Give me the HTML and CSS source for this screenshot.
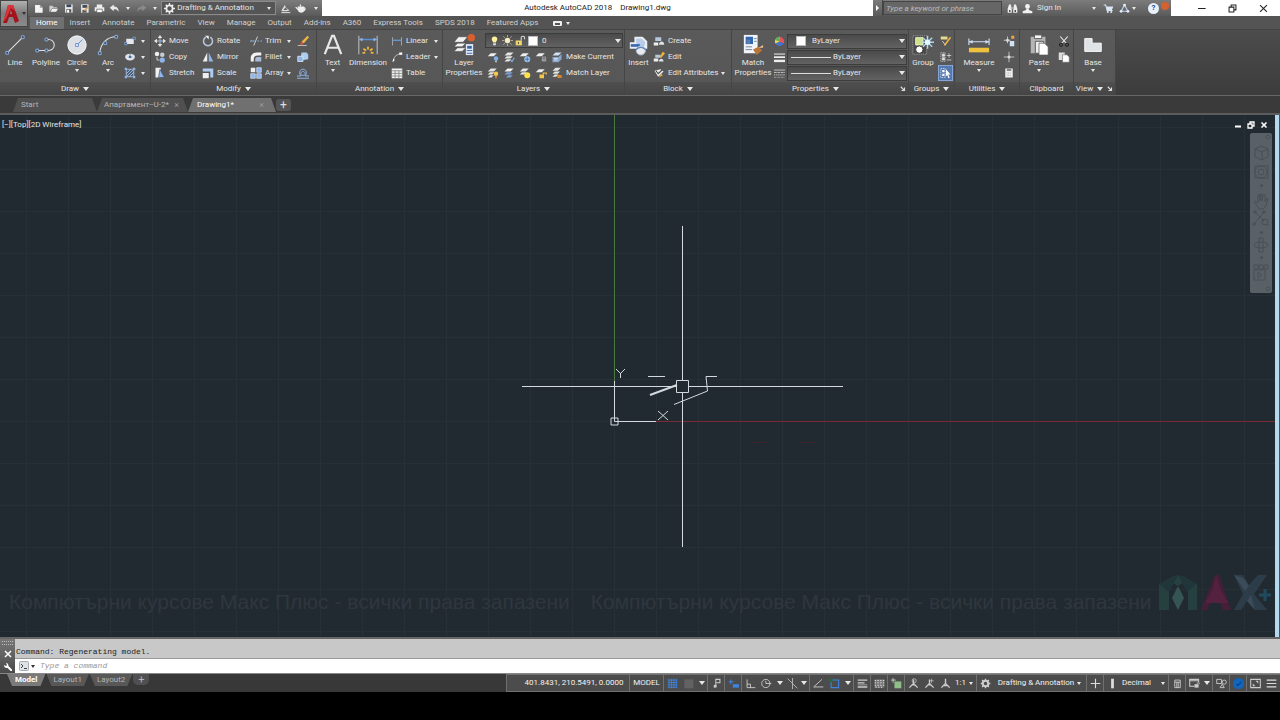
FILE: index.html
```html
<!DOCTYPE html>
<html lang="en">

<head>
  <meta charset="UTF-8" />
  <meta name="viewport" content="width=device-width, initial-scale=1.0" />
  <title>Autodesk AutoCAD 2018</title>
  <link rel="stylesheet" href="styles.css">
</head>

<body>
  <!-- title bar + ribbon tabs -->
  <header class="top">
    <button class="app-btn" aria-label="Application menu">
      <svg width="18" height="20" viewBox="0 0 18 20">
        <path d="M1 19 6 1h5l6 16-4 2-2-6H7l-2 6z" fill="#a5121b" />
        <path d="M6 1h5l2 6-4-3-4 9-4 6z" fill="#d8333b" />
        <path d="m8 10 1-4 1 4z" fill="#888" />
      </svg>
      <i class="caret dark"></i>
    </button>

    <div class="titlebar">
      <div class="qat">
        <button aria-label="New"><svg viewBox="0 0 16 16"><path d="M3 3h7l4 4v7H3z" fill="#f4f4f4" /><path d="M10 3v4h4z" fill="#999" /></svg></button>
        <button aria-label="Open"><svg viewBox="0 0 16 16"><path d="M2 13V4h5l1 2h5v2H6z" fill="#ccc" /><path d="m3 13 3-5h9l-3 5z" fill="#f2f2f2" stroke="#666" stroke-width=".6" /></svg></button>
        <button aria-label="Save"><svg viewBox="0 0 16 16"><path d="M3 2h11v12H3z" fill="#e8e8e8" /><path d="M5 2h7v4H5z" fill="#39485c" /><path d="M5 9h7v5H5z" fill="#555" /><path d="M6 10h3v4H6z" fill="#fff" /></svg></button>
        <button aria-label="Save as"><svg viewBox="0 0 16 16"><path d="M3 2h11v12H3z" fill="#e8e8e8" /><path d="M5 3h7v4H5z" fill="#39485c" /><path d="M5 10h6v4H5z" fill="#555" /><path d="m7 11 6-7 2 1-6 7z" fill="#d9a15c" /></svg></button>
        <button aria-label="Plot"><svg viewBox="0 0 16 16"><path d="M4 2h8v4H4zM1 6h14v6H1z" fill="#eee" /><path d="M4 9h8v5H4z" fill="#fff" stroke="#555" /></svg></button>
        <button aria-label="Undo"><svg viewBox="0 0 16 16"><path d="M1 7l6-5v3c5 0 7 3 7 8-2-4-4-4-7-4v3z" fill="#e9e9e9" /></svg></button>
        <i class="caret"></i>
        <button aria-label="Redo"><svg viewBox="0 0 16 16"><path d="M15 7 9 2v3c-5 0-7 3-7 8 2-4 4-4 7-4v3z" fill="#8a8a8a" /></svg></button>
        <i class="caret"></i>
        <div class="workspace">
          <svg viewBox="0 0 16 16"><circle cx="8" cy="8" r="4.500" fill="none" stroke="#eee" stroke-width="2.500" /><path d="M8 0v3M8 13v3M0 8h3M13 8h3M2.500 2.500l2 2M11.500 11.500l2 2M2.500 13.500l2-2M11.500 4.500l2-2" stroke="#eee" stroke-width="2" /></svg>
          <select aria-label="Workspace"><option>Drafting &amp; Annotation</option></select>
          <i class="caret"></i>
        </div>
        <button aria-label="Share"><svg viewBox="0 0 16 16"><path d="m2 11 5-8 2 4 5 4-4 1H3z" fill="#ddd" /><path d="m5 10 3-4 3 4z" fill="#666" /><path d="M2 14h13" stroke="#ddd" stroke-width="1.500" /></svg></button>
        <button aria-label="Render"><svg viewBox="0 0 16 16"><path d="M4 5h9c2 5 0 9-4 9s-6-4-5-9z" fill="#eee" /><path d="M5 10 1 6M12 7c4-1 3 4 0 4M8 2v3" stroke="#eee" stroke-width="1.800" fill="none" /></svg></button>
        <i class="caret customize"></i>
      </div>
      <div class="title"><span>Autodesk AutoCAD 2018</span><span>Drawing1.dwg</span></div>
      <div class="infocenter">
        <button class="expand" aria-label="Collapse search"></button>
        <input type="text" class="search" aria-label="Search" placeholder="Type a keyword or phrase">
        <button aria-label="Find"><svg viewBox="0 0 16 16"><path d="M3 2h3v3l1 1v8H1V8zM10 2h3l2 6v6H9V6l1-1z" fill="#eee" /><path d="M6 6h4v3H6z" fill="#aaa" /><path d="M3 10h2v3H3zM11 10h2v3h-2z" fill="#444" /></svg></button>
        <button class="signin"><svg viewBox="0 0 16 16"><circle cx="8" cy="5" r="3.500" fill="#f2f2f2" /><path d="M6 8h4v2l5 2v3H1v-3l5-2z" fill="#f2f2f2" /></svg>Sign In<i class="caret"></i></button>
        <button aria-label="App store"><svg viewBox="0 0 16 16"><path d="M1 3h3l2 8h8" stroke="#dbe6f5" fill="none" stroke-width="1.500" /><path d="M5 5h10l-2 5H6z" fill="#dbe6f5" /><circle cx="7" cy="13" r="1.500" fill="#dbe6f5" /><circle cx="12" cy="13" r="1.500" fill="#dbe6f5" /></svg></button>
        <button aria-label="Stay connected"><svg viewBox="0 0 16 16"><path d="m8 3 5 9H3z" fill="none" stroke="#b9cdea" stroke-width="1.800" /><g fill="#e5eefb"><circle cx="8" cy="3" r="2" /><circle cx="3" cy="12" r="2" /><circle cx="13" cy="12" r="2" /></g></svg></button>
        <i class="caret"></i>
        <button class="help" aria-label="Help">?</button>
        <i class="notice"></i>
      </div>
      <div class="win-btns">
        <button aria-label="Minimize"><svg viewBox="0 0 16 16"><path d="M3 8h11" stroke="#222" stroke-width="1.500" /></svg></button>
        <button aria-label="Restore"><svg viewBox="0 0 16 16"><path d="M3 6h7v7H3zM6 6V3h7v7h-3" fill="none" stroke="#222" stroke-width="1.500" /></svg></button>
        <button aria-label="Close"><svg viewBox="0 0 16 16"><path d="m3 3 10 10M13 3 3 13" stroke="#222" stroke-width="1.500" /></svg></button>
      </div>
    </div>

    <nav class="ribbon-tabs">
      <a class="active" href="#">Home</a>
      <a href="#">Insert</a>
      <a href="#">Annotate</a>
      <a href="#">Parametric</a>
      <a href="#">View</a>
      <a href="#">Manage</a>
      <a href="#">Output</a>
      <a href="#">Add-ins</a>
      <a href="#">A360</a>
      <a href="#">Express Tools</a>
      <a href="#">SPDS 2018</a>
      <a href="#">Featured Apps</a>
      <button class="min-ribbon" aria-label="Minimize ribbon"><b></b><i class="caret"></i></button>
    </nav>
  </header>

  <!-- ribbon -->
  <div class="ribbon">
    <section class="panel draw">
      <div class="panel-body">
        <button class="big"><svg viewBox="0 0 24 24"><path d="M4 20 20 4" stroke="#ddd" stroke-width="1.200" /><path d="M2 19h3v3H2zM19 2h3v3h-3z" fill="#345" stroke="#8fb4e8" /></svg>Line</button>
        <button class="big"><svg viewBox="0 0 24 24"><path d="M3 18h12a6 6 0 0 0 0-12h-2" fill="none" stroke="#ddd" stroke-width="1.200" /><path d="M1 16.500h3v3H1zM11 16.500h3v3h-3zM11 4.500h3v3h-3z" fill="#345" stroke="#8fb4e8" /></svg>Polyline</button>
        <button class="big"><svg viewBox="0 0 24 24"><circle cx="12" cy="12" r="10" fill="#dcdfe4" stroke="#fff" /><path d="m12 12 6-6" stroke="#5a86c8" /><path d="M10.500 10.500h3v3h-3z" fill="#fff" stroke="#5a86c8" /></svg>Circle<i class="caret"></i></button>
        <button class="big"><svg viewBox="0 0 24 24"><path d="M3 21C4 10 11 3 21 3" fill="none" stroke="#ddd" stroke-width="1.200" /><path d="M1.500 19.500h3v3h-3zM7.500 8.500h3v3h-3zM19.500 1.500h3v3h-3z" fill="#345" stroke="#8fb4e8" /></svg>Arc<i class="caret"></i></button>
        <div class="col">
          <button class="small" aria-label="Rectangle"><svg viewBox="0 0 16 16"><path d="M3 5h10v7H3z" fill="#e4e7ec" /><path d="M1 10h3v3H1zM12 3h3v3h-3z" fill="#345" stroke="#8fb4e8" /></svg><i class="caret"></i></button>
          <button class="small" aria-label="Ellipse"><svg viewBox="0 0 16 16"><ellipse cx="8" cy="8" rx="6.500" ry="4.500" fill="#dde3e8" /><path d="M6 8h5M8 3v5" stroke="#4a6c9c" /><circle cx="8" cy="8" r="1.500" fill="#3b5f95" /></svg><i class="caret"></i></button>
          <button class="small" aria-label="Hatch"><svg viewBox="0 0 16 16"><path d="M3 3h10v10H3z" fill="#47607e" stroke="#b9cfec" /><path d="m3 9 6-6M3 13 13 3M7 13l6-6" stroke="#b9cfec" /><path d="M1 1h3v3H1zM12 1h3v3h-3zM1 12h3v3H1zM12 12h3v3h-3z" fill="#8fb4e8" /></svg><i class="caret"></i></button>
        </div>
      </div>
      <h2>Draw <i class="caret"></i></h2>
    </section>

    <section class="panel modify">
      <div class="panel-body">
        <div class="grid">
          <button class="small"><svg viewBox="0 0 16 16"><path d="M8 2v12M2 8h12" stroke="#ddd" /><path d="m8 0 3 4H5zM8 16l3-4H5zM0 8l4-3v6zM16 8l-4-3v6z" fill="#e6e6e6" /><circle cx="8" cy="8" r="1.500" fill="#7aa2dc" /></svg>Move</button>
          <button class="small"><svg viewBox="0 0 16 16"><path d="M5 3a6 6 0 1 0 6 0" fill="none" stroke="#b9c7dc" stroke-width="2" /><path d="M4 1h5v5z" fill="#eee" /></svg>Rotate</button>
          <button class="small"><svg viewBox="0 0 16 16"><path d="M0 8h6M10 8h2M14 8h2" stroke="#8fb4e8" stroke-width="1.500" /><path d="m5 14 5-12" stroke="#ddd" stroke-width="1.200" /></svg>Trim<i class="caret"></i></button>
          <button class="small" aria-label="Erase"><svg viewBox="0 0 16 16"><path d="M1 14h12" stroke="#ddd" /><path d="m14 1 2 2-7 8-3-2z" fill="#f0b63c" /><path d="m6 9 3 2-3 3-2-2z" fill="#d9553a" /></svg></button>
          <button class="small"><svg viewBox="0 0 16 16"><circle cx="4" cy="4" r="3" fill="#eee" /><circle cx="11" cy="5" r="3" fill="#c7ccd3" /><circle cx="11" cy="12" r="3.500" fill="#8fb4e8" /><path d="M4 8v4h3" fill="none" stroke="#eee" /></svg>Copy</button>
          <button class="small"><svg viewBox="0 0 16 16"><path d="M7 2v12H1z" fill="#eee" /><path d="M9 2v12h6z" fill="#8fb4e8" /></svg>Mirror</button>
          <button class="small"><svg viewBox="0 0 16 16"><path d="M1 14V9c0-4 4-7 8-7h6v4H10c-3 0-5 2-5 5v3z" fill="#f4f4f4" /><path d="M7 14v-3c0-2 1-3 3-3h5v6z" fill="#a9bcd6" /></svg>Fillet<i class="caret"></i></button>
          <button class="small" aria-label="Explode"><svg viewBox="0 0 16 16"><path d="M6 2h7l2 3v6l-6 1-4-3z" fill="#aecbf0" /><path d="M1 7h7v7H1z" fill="#8fb4e8" stroke="#e3edfa" /></svg></button>
          <button class="small"><svg viewBox="0 0 16 16"><path d="M2 1h7v13H2z" fill="#f0f0f0" /><path d="m8 3 6 11H6z" fill="#8fb4e8" stroke="#345" stroke-width=".8" /></svg>Stretch</button>
          <button class="small"><svg viewBox="0 0 16 16"><path d="M1 2h14v12h-4V6H1z" fill="#aecbf0" /><path d="M1 8h8v7H1z" fill="#eee" /></svg>Scale</button>
          <button class="small"><svg viewBox="0 0 16 16"><path d="M1 1h6v6H1z" fill="#eee" /><path d="M9 1h6v6H9zM1 9h6v6H1zM9 9h6v6H9z" fill="#8fb4e8" stroke="#d6e4f7" /></svg>Array<i class="caret"></i></button>
          <button class="small" aria-label="Offset"><svg viewBox="0 0 16 16"><path d="M0 12h5C2 7 4 3 8 3s6 4 3 9h5M0 15h16M6 11c-2-3 0-5 2-5s4 2 2 5z" fill="none" stroke="#8fb4e8" stroke-width="1.300" /></svg></button>
        </div>
      </div>
      <h2>Modify <i class="caret"></i></h2>
    </section>

    <section class="panel annotation">
      <div class="panel-body">
        <button class="big"><svg viewBox="0 0 24 24"><path d="M3 22 11 2h2l8 20M6 15h12" fill="none" stroke="#e8e8e8" stroke-width="2.400" /></svg>Text<i class="caret"></i></button>
        <button class="big wide"><svg viewBox="0 0 24 24"><path d="M2 2v20M22 2v20" stroke="#b8b8b8" stroke-width="1.200" /><path d="M3 6h18" stroke="#5c8fd6" stroke-width="1.600" /><path d="m2 6 4-2v4zM22 6l-4-2v4z" fill="#8fb4e8" /><path d="m6 21 3-1M18 21l-3-1M7 16l3 2M17 16l-3 2M12 14v3" stroke="#f0b63c" stroke-width="2" /></svg>Dimension</button>
        <div class="col">
          <button class="small"><svg viewBox="0 0 16 16"><path d="M2 3v11M14 3v11" stroke="#bbb" /><path d="M2 7h12" stroke="#6d9de0" stroke-width="1.600" /></svg>Linear<i class="caret"></i></button>
          <button class="small"><svg viewBox="0 0 16 16"><path d="M3 14C4 8 6 5 12 4h2" stroke="#ddd" fill="none" /><path d="m2 15 1-5 2 2zM11 2h4v3h-4z" fill="#fff" /></svg>Leader<i class="caret"></i></button>
          <button class="small"><svg viewBox="0 0 16 16"><path d="M1 2h14v13H1z" fill="#f2f2f2" /><path d="M1 5h14M1 8.500h14M1 12h14M5.500 5v10M10.500 5v10" stroke="#777" /></svg>Table</button>
        </div>
      </div>
      <h2>Annotation <i class="caret"></i></h2>
    </section>

    <section class="panel layers">
      <div class="panel-body">
        <button class="big wide"><svg viewBox="0 0 24 24"><path d="m1 9 5-6h10l-5 6zM1 14l4-4h9l-4 4zM1 19l4-4h9l-4 4z" fill="#f2f2f2" stroke="#444" stroke-width=".6" /><path d="M14 11h8v12h-8z" fill="#dfe9f7" /><path d="M15.500 13h5v3h-5z" fill="#37639f" /><path d="M15 18h6M15 21h6" stroke="#37639f" /><circle cx="20" cy="4" r="4" fill="#d8602f" /></svg>Layer<br>Properties</button>
        <div class="col">
          <div class="combo layer-combo">
            <svg viewBox="0 0 16 16"><path d="M4 6a4 4 0 1 1 8 0c0 2-2 3-2 5H6c0-2-2-3-2-5z" fill="#fff0a0" /><path d="M6 12h4v3H6z" fill="#ddd" /></svg>
            <svg viewBox="0 0 16 16"><circle cx="8" cy="8" r="4" fill="#f3ecc4" /><path d="M8 0v3M8 13v3M0 8h3M13 8h3M2 2l2 2M12 12l2 2M2 14l2-2M12 4l2-2" stroke="#d9d2a4" /></svg>
            <svg viewBox="0 0 16 16"><path d="M1 8h9v7H1z" fill="#f0d66a" /><path d="M9 8V4c0-3 5-3 5 0v2" fill="none" stroke="#ddd" stroke-width="1.500" /><path d="M5 10v3" stroke="#554" stroke-width="1.500" /></svg>
            <b class="swatch"></b>
            <select aria-label="Layer"><option>0</option></select>
            <i class="caret"></i>
          </div>
          <div class="tools">
            <button aria-label="Off"><svg viewBox="0 0 16 16"><path d="m1 7 4-4h8l-4 4z" fill="#eee" /><circle cx="12" cy="10" r="3" fill="#7fb0e8" /><path d="M11 13h2v2h-2z" fill="#ddd" /></svg></button>
            <button aria-label="Isolate"><svg viewBox="0 0 16 16"><path d="m2 6 4-4h8l-4 4zM2 10l3-3h8l-3 3zM2 14l3-3h6l-3 3z" fill="#e4e4e4" /><path d="m10 12 2 2 3-5" stroke="#7fb0e8" fill="none" stroke-width="1.500" /></svg></button>
            <button aria-label="Freeze"><svg viewBox="0 0 16 16"><path d="m1 7 4-4h8l-4 4z" fill="#eee" /><circle cx="11" cy="11" r="4" fill="#9cc4f0" /><path d="M11 8v6M8 11h6" stroke="#36679f" /></svg></button>
            <button aria-label="Lock"><svg viewBox="0 0 16 16"><path d="m1 7 4-4h8l-4 4z" fill="#eee" /><path d="M9 10h6v4H9z" fill="#999" /><path d="M10 10V8h4v2" fill="none" stroke="#bbb" /></svg></button>
            <button class="small"><svg viewBox="0 0 16 16"><path d="m2 6 4-4h8l-4 4z" fill="#cfe0f7" /><path d="M2 8h8l4-4v7l-4 4H2z" fill="#8aa6cc" /><path d="M4 10h5M4 12h5" stroke="#e3edfa" /></svg>Make Current</button>
          </div>
          <div class="tools">
            <button aria-label="Turn all on"><svg viewBox="0 0 16 16"><path d="m1 6 4-4h8l-4 4zM1 10l3-3h6l-3 3zM1 14l3-3h5l-3 3z" fill="#e4e4e4" /><circle cx="12" cy="9" r="3" fill="#f5c84b" /><path d="M11 12h2v3h-2z" fill="#e88a3a" /></svg></button>
            <button aria-label="Unisolate"><svg viewBox="0 0 16 16"><path d="m2 6 4-4h8l-4 4z" fill="#f2f2f2" /><path d="m2 10 3-3h8l-3 3zM4 14l3-3h6l-3 3z" fill="#7f9ed0" /></svg></button>
            <button aria-label="Thaw all"><svg viewBox="0 0 16 16"><path d="m1 6 4-4h8l-4 4zM1 10l3-3h6l-3 3z" fill="#e4e4e4" /><circle cx="11" cy="11" r="4" fill="#ffe14d" /></svg></button>
            <button aria-label="Unlock"><svg viewBox="0 0 16 16"><path d="m1 7 4-4h8l-4 4z" fill="#eee" /><path d="M6 10h6v5H6z" fill="#f5c84b" /><path d="M11 10V8h4v2" fill="none" stroke="#f5c84b" stroke-width="1.500" /></svg></button>
            <button class="small"><svg viewBox="0 0 16 16"><path d="m2 5 4-4h7l-4 4zM2 9l3-3h7l-3 3zM2 13l3-3h5l-3 3z" fill="#e4e4e4" /><path d="m8 10 6 1 1 3-6 1z" fill="#d98634" /></svg>Match Layer</button>
          </div>
        </div>
      </div>
      <h2>Layers <i class="caret"></i></h2>
    </section>

    <section class="panel block">
      <div class="panel-body">
        <button class="big"><svg viewBox="0 0 24 24"><path d="M2 9h5V3h9l5 5v8H2z" fill="#eceff4" /><path d="M9 5h6l4 4-1 4H9z" fill="#b9cde8" /><path d="M3 11h10v3H3z" fill="#3d6db0" /><circle cx="14" cy="18" r="5" fill="#e8eaee" stroke="#9fb3cf" /><path d="M9 17c3-3 7-3 10 0" fill="none" stroke="#5c86c0" stroke-width="1.500" /></svg>Insert</button>
        <div class="col">
          <button class="small"><svg viewBox="0 0 16 16"><path d="M3 3h8v5H3z" fill="#b9c7dc" /><path d="M1 10h6v4H1z" fill="#eee" /><path d="M8 13c0-6 7-6 7 0z" fill="#dfe3ea" /></svg>Create</button>
          <button class="small"><svg viewBox="0 0 16 16"><path d="M3 5h7v4H3z" fill="#b9c7dc" /><path d="M1 10h6v4H1z" fill="#eee" /><path d="M8 14c0-5 6-5 6 0z" fill="#dfe3ea" /><path d="m9 8 4-7 3 2-5 6z" fill="#f0b63c" /></svg>Edit</button>
          <button class="small"><svg viewBox="0 0 16 16"><path d="m2 5 5 8 7-7-4-3z" fill="#eee" /><path d="m4 5 3 4 5-5" fill="none" stroke="#444" stroke-width="1.500" /><path d="m8 14 3-5 2 2z" fill="#f0b63c" /></svg>Edit Attributes<i class="caret"></i></button>
        </div>
      </div>
      <h2>Block <i class="caret"></i></h2>
    </section>

    <section class="panel properties">
      <div class="panel-body">
        <button class="big wide"><svg viewBox="0 0 24 24"><path d="M2 1h15v20H2z" fill="#f2f4f7" /><path d="M4 3h8v8H4z" fill="#2f66b0" /><path d="M5 6h4v5H5z" fill="#5a7fae" /><path d="M13 5h3M13 8h3M4 14h7M4 17h7" stroke="#6c7f99" /><path d="m12 17 6-3 4 4-6 5z" fill="#b9743a" /><path d="m18 15 5-3v3z" fill="#eac08c" /></svg>Match<br>Properties</button>
        <div class="props">
          <svg viewBox="0 0 16 16"><path d="M8 8V1a7 7 0 0 1 6 10z" fill="#e8505b" /><path d="m8 8 6 3a7 7 0 0 1-12 0z" fill="#4673d0" /><path d="M8 8 2 11A7 7 0 0 1 8 1z" fill="#f2d94c" /><path d="M8 1a7 7 0 0 0-6 5l6 2z" fill="#59b356" /></svg>
          <div class="combo"><b class="swatch"></b><select aria-label="Object color"><option>ByLayer</option></select><i class="caret"></i></div>
          <svg viewBox="0 0 16 16"><path d="M0 3h16" stroke="#eee" stroke-width="1.500" /><path d="M0 7.500h16" stroke="#eee" stroke-width="2.500" /><path d="M0 13h16" stroke="#eee" stroke-width="3.500" /></svg>
          <div class="combo"><b class="line"></b><select aria-label="Lineweight"><option>ByLayer</option></select><i class="caret"></i></div>
          <svg viewBox="0 0 16 16"><path d="M0 3h16" stroke="#eee" /><path d="M0 6.500h16" stroke="#eee" stroke-dasharray="4 1" /><path d="M0 10h16" stroke="#eee" stroke-dasharray="2 1" /><path d="M0 13.500h16" stroke="#eee" stroke-dasharray="1 1" /></svg>
          <div class="combo"><b class="line"></b><select aria-label="Linetype"><option>ByLayer</option></select><i class="caret"></i></div>
        </div>
      </div>
      <h2>Properties <i class="caret"></i><svg class="launcher" viewBox="0 0 8 8"><path d="M1 1l4 4M6 2v4H2" fill="none" stroke="#ddd" stroke-width="1.500" /></svg></h2>
    </section>

    <section class="panel groups">
      <div class="panel-body">
        <button class="big"><svg viewBox="0 0 24 24"><path d="M1 2h15v20H1z" fill="#4b4b4b" stroke="#aaa" stroke-dasharray="1 1" /><path d="M4 4h8v8H4z" fill="#cfe08a" stroke="#edf4c8" /><circle cx="8" cy="17" r="4" fill="#fff" stroke="#333" /><path d="M17 2v14M10 9h14M12 4l10 10M22 4 12 14" stroke="#a9d8f5" stroke-width="1.500" /><circle cx="17" cy="9" r="3" fill="#e6f6ff" /></svg>Group</button>
        <div class="col">
          <button class="small" aria-label="Ungroup"><svg viewBox="0 0 16 16"><path d="M1 2h9v4H1z" fill="#e4d98e" /><path d="m6 14 8-11" stroke="#f0b63c" stroke-width="2" /><path d="m3 8 4 5" stroke="#eee" /></svg></button>
          <button class="small" aria-label="Group edit"><svg viewBox="0 0 16 16"><path d="M1 2h6v12H1z" fill="none" stroke="#bbb" stroke-dasharray="2 1" /><path d="M3 4h3v3H3zM3 9h3v3H3zM9 6h6M12 3v6M9 12h6" stroke="#ddd" fill="#ddd" /></svg></button>
          <button class="small on" aria-label="Group selection"><svg viewBox="0 0 16 16"><path d="M1 2h6v12H1z" fill="none" stroke="#d6e4f7" stroke-dasharray="2 1" /><path d="M3 4h3v3H3zM3 9h3v3H3zM8 3l6 7H11l2 4-2 1-1-4-2 1z" fill="#fff" /></svg></button>
        </div>
      </div>
      <h2>Groups <i class="caret"></i></h2>
    </section>

    <section class="panel utilities">
      <div class="panel-body">
        <button class="big wide"><svg viewBox="0 0 24 24"><path d="M1 5v7M23 5v7M1 8.500h22" stroke="#cfe0f7" stroke-width="1.200" /><path d="m1 8.500 4-2v4zM23 8.500l-4-2v4z" fill="#cfe0f7" /><path d="M1 15h22v5H1z" fill="#eec13f" /></svg>Measure<i class="caret"></i></button>
        <div class="col">
          <button class="small" aria-label="Quick select"><svg viewBox="0 0 16 16"><path d="M6 2v9M1 7h9" stroke="#ddd" /><circle cx="6" cy="7" r="2" fill="#ddd" /><path d="M11 1h4v4h-4z" fill="#f0a63c" /><path d="M9 8h6v7H9z" fill="#cfe0f7" /></svg></button>
          <button class="small" aria-label="Point"><svg viewBox="0 0 16 16"><path d="M8 1v14M1 8h14" stroke="#ddd" /><circle cx="8" cy="8" r="2" fill="#ddd" /></svg></button>
          <button class="small" aria-label="Calculator"><svg viewBox="0 0 16 16"><path d="M3 2h10v12H3z" fill="#eee" /><path d="M5 4h6" stroke="#666" stroke-width="2" /><path d="M5 8h6M5 11h6" stroke="#888" stroke-dasharray="1 1" /></svg></button>
        </div>
      </div>
      <h2>Utilities <i class="caret"></i></h2>
    </section>

    <section class="panel clipboard">
      <div class="panel-body">
        <button class="big"><svg viewBox="0 0 24 24"><path d="M3 3h16v18H3z" fill="#b5b5b5" /><path d="M7 1h8v4H7z" fill="#f5f5f5" stroke="#555" /><path d="M8 8h9v13H8z" fill="#eee" stroke="#555" /><path d="M12 10h6l4 4v9H12z" fill="#fff" stroke="#555" stroke-width=".8" /></svg>Paste<i class="caret"></i></button>
        <div class="col">
          <button class="small" aria-label="Cut"><svg viewBox="0 0 16 16"><path d="m3 2 8 9M13 2 5 11" stroke="#eee" stroke-width="1.500" /><circle cx="4" cy="13" r="2" fill="none" stroke="#222" stroke-width="1.500" /><circle cx="12" cy="13" r="2" fill="none" stroke="#222" stroke-width="1.500" /></svg></button>
          <button class="small" aria-label="Copy clip"><svg viewBox="0 0 16 16"><path d="M1 2h8v10H1z" fill="#ddd" /><path d="M6 5h6l3 3v7H6z" fill="#fff" stroke="#666" stroke-width=".8" /></svg></button>
        </div>
      </div>
      <h2>Clipboard</h2>
    </section>

    <section class="panel view">
      <div class="panel-body">
        <button class="big"><svg viewBox="0 0 24 24"><path d="M3 5h8v5h10v9H3z" fill="#dfe2e6" stroke="#fff" /></svg>Base<i class="caret"></i></button>
      </div>
      <h2>View <i class="caret"></i><svg class="launcher" viewBox="0 0 8 8"><path d="M1 1l4 4M6 2v4H2" fill="none" stroke="#ddd" stroke-width="1.500" /></svg></h2>
    </section>
  </div>

  <!-- open drawings -->
  <nav class="file-tabs">
    <a class="start" href="#">Start</a>
    <a href="#">Апартамент--U-2*<i>×</i></a>
    <a class="active" href="#">Drawing1*<i>×</i></a>
    <button aria-label="New drawing">+</button>
  </nav>

  <!-- model space -->
  <main class="viewport">
    <svg class="canvas">
      <defs>
        <pattern id="grid" x="614" y="12" width="42" height="42" patternUnits="userSpaceOnUse">
          <path d="M.5 0v42M0 .5h42" stroke="#272f37" />
        </pattern>
      </defs>
      <rect width="100%" height="100%" fill="url(#grid)" />
      <line x1="614.500" y1="0" x2="614.500" y2="266" stroke="#48793f" />
      <line x1="655" y1="306.500" x2="100%" y2="306.500" stroke="#7a2a36" />
      <path d="M752 327.500h15M800 327.500h16" stroke="#40242d" />
      <g fill="none" stroke="#d3d9dc">
        <path d="M614.500 266v40.500H656M611 303h7v7h-7z" />
        <path d="m616 254 4.500 4.500 4.500-4.500M620.500 258v5M658 296l10 9M668 296l-10 9" />
        <path d="M648 261.500h17M717 261.500h-11l1.500 14.500L674 289.500" />
        <path d="m650 280 27-10" stroke-width="2" />
        <path d="M522 271.500h154M689 271.500h154M682.500 111v154M682.500 277v155M676.500 265.500h12v12h-12z" />
      </g>
    </svg>

    <div class="view-label"><a href="#">[−]</a><a href="#">[Top]</a><a href="#">[2D Wireframe]</a></div>

    <div class="doc-btns">
      <button aria-label="Minimize drawing"><svg viewBox="0 0 8 8"><path d="M1 5.500h6" stroke="#fff" stroke-width="2" /></svg></button>
      <button aria-label="Restore drawing"><svg viewBox="0 0 8 8"><path d="M1 3h4v4H1zM3 3V1h4v4H5" stroke="#fff" fill="none" stroke-width="1.300" /></svg></button>
      <button aria-label="Close drawing"><svg viewBox="0 0 8 8"><path d="m1.500 1.500 5 5M6.500 1.500l-5 5" stroke="#fff" stroke-width="1.600" /></svg></button>
    </div>

    <div class="navbar">
      <svg width="22" height="160" viewBox="0 0 22 160" fill="none" stroke="#484f55">
        <circle cx="18" cy="4" r="2" />
        <path d="m5 16 6-3 7 3v8l-6 3-7-3zM5 16l7 3 6-3M12 19v8" />
        <path d="M5 33h13v12H5z" /><circle cx="11" cy="39" r="6" /><circle cx="11" cy="39" r="3" />
        <path d="M10 52h3l-1.500 2zM10 99h3l-1.500 2zM10 124h3l-1.500 2z" fill="#434a50" />
        <path d="M8 74c-3-4-4-5-3-6l3 2V62h2v6-7h2v7l1-6h2v7l2-4 1 1-2 7-3 3H9z" />
        <path d="m5 79 9 9M14 79l-9 11" /><circle cx="15" cy="89" r="3" /><path d="m17 91 2 2M4 78h2v2H4zM13 78h2v2h-2zM3 90h2v2H3z" />
        <ellipse cx="11" cy="112" rx="7" ry="3" /><path d="M9 105h4v14H9z" />
        <path d="M4 132h4v4H4zM9 132h4v4H9zM14 132h4v4h-4zM4 137h11v10H4zM8 139l4 3-4 3z" />
        <circle cx="18" cy="156" r="2" />
      </svg>
    </div>

    <div class="watermark">
      <span>Компютърни курсове Макс Плюс - всички права запазени</span>
      <span>Компютърни курсове Макс Плюс - всички права запазени</span>
      <svg width="114" height="38" viewBox="0 0 114 38">
        <path d="M1 10 14 3l6-2 6 2 13 7v26H30V18l-5-9-5 3-5-3-4 9v18H1z" fill="#25403f" />
        <path d="m20 12 6 12-6 12-6-12z" fill="#355552" />
        <path d="M1 10 20 1l-9 17zM39 10 20 1l9 17z" fill="#20363a" />
        <path d="M43 36 57 1h4l12 35h-8l-3-7H52l-3 7z" fill="#451f39" />
        <path d="m58 1 4 14 8 14H47l8-14z" fill="#54223f" />
        <path d="M76 1h9l6 10 9-10h9L96 20l13 16H97l-8-9-6 9h-7l9-16z" fill="#2c3d49" />
        <path d="m76 1 9 3 6 8-4 5zM97 36l-8-9 4-6z" fill="#3b4b59" />
        <path d="M107 15v12M101 21h12" stroke="#204a5e" stroke-width="3" />
      </svg>
    </div>
  </main>

  <!-- command line -->
  <div class="command">
    <div class="command-side">
      <i class="grip"></i>
      <button aria-label="Close command line"><svg viewBox="0 0 8 8"><path d="m1 1 6 6M7 1 1 7" stroke="#fff" stroke-width="1.500" /></svg></button>
      <button aria-label="Customize"><svg viewBox="0 0 8 8"><path d="m3 3 5 5" stroke="#fff" stroke-width="2" /><path d="M0 2c0 3 3 4 4 2s0-4-2-4l1 2-1 1z" fill="#fff" /></svg></button>
    </div>
    <div class="command-main">
      <p>Command: Regenerating model.</p>
      <label class="prompt">
        <svg viewBox="0 0 10 10"><rect x=".5" y=".5" width="9" height="9" rx="1" fill="#dde2e6" stroke="#a5abb0" /><path d="m2 3 2 2-2 2M5 7.500h3" fill="none" stroke="#444" /></svg>
        <i class="caret dark"></i>
        <input type="text" placeholder="Type a command" aria-label="Command">
      </label>
    </div>
  </div>

  <footer class="bottom">
    <nav class="layout-tabs">
      <a class="active" href="#">Model</a>
      <a href="#">Layout1</a>
      <a href="#">Layout2</a>
      <button aria-label="New layout">+</button>
    </nav>

    <div class="status">
      <button class="coords">401.8431, 210.5491, 0.0000</button>
      <button class="model sep">MODEL</button>
      <button class="sep" aria-label="Grid"><svg viewBox="0 0 16 16"><path d="M3 1v14M6.500 1v14M10 1v14M13.500 1v14M1 3h14M1 6.500h14M1 10h14M1 13.500h14" stroke="#3d85e0" stroke-width="1.300" /></svg></button>
      <button aria-label="Snap"><svg viewBox="0 0 16 16"><path d="M2 2h13v13H2z" fill="#626262" /></svg></button>
      <button class="drop" aria-label="Snap settings"><i class="caret"></i></button>
      <button class="sep" aria-label="Infer constraints"><svg viewBox="0 0 16 16"><path d="M7 12V2h6v5H8" fill="none" stroke="#ccc" stroke-width="1.500" /><path d="M4 10h4v4H4z" fill="#ccc" /></svg></button>
      <button class="sep" aria-label="Dynamic input"><svg viewBox="0 0 16 16"><path d="M4 2v7M1 5.500h7" stroke="#3d85e0" stroke-width="1.500" /><path d="M7 9h9v5H7z" fill="#3d85e0" /></svg></button>
      <button class="sep" aria-label="Ortho"><svg viewBox="0 0 16 16"><path d="M3 2v12h12M3 9h5v5" fill="none" stroke="#ccc" stroke-width="1.300" /></svg></button>
      <button aria-label="Polar"><svg viewBox="0 0 16 16"><circle cx="7" cy="8" r="6" fill="none" stroke="#ccc" stroke-width="1.300" /><path d="M7 4v4h8" stroke="#ccc" fill="none" stroke-width="1.300" /></svg></button>
      <button class="drop" aria-label="Polar settings"><i class="caret"></i></button>
      <button class="narrow" aria-label="Isodraft"><svg viewBox="0 0 16 16"><path d="m1 1 14 14M8 0v16" stroke="#bbb" stroke-width="1.300" /></svg></button>
      <button class="drop" aria-label="Isoplanes"><i class="caret"></i></button>
      <button class="sep" aria-label="Snap tracking"><svg viewBox="0 0 16 16"><path d="M15 13H1L13 2" fill="none" stroke="#ccc" stroke-width="1.300" /></svg></button>
      <button aria-label="Object snap"><svg viewBox="0 0 16 16"><path d="M3 3h11v11H3z" fill="none" stroke="#3d85e0" stroke-width="1.600" /><path d="M0 1h5v5H0z" fill="#246b38" /></svg></button>
      <button class="drop" aria-label="Snap modes"><i class="caret"></i></button>
      <button class="sep" aria-label="Lineweight"><svg viewBox="0 0 16 16"><path d="M1 3h14M1 7h10M1 13h14" stroke="#ccc" stroke-width="2" /><path d="M1 10h14" stroke="#ccc" /></svg></button>
      <button class="sep" aria-label="Transparency"><svg viewBox="0 0 16 16"><path d="M1 2h14v12H1z" fill="#777" /><path d="M1 3.500h14M1 7h14M1 10.500h14M2 13.500h12" stroke="#ddd" stroke-width="1.500" stroke-dasharray="2 2" /></svg></button>
      <button class="sep" aria-label="Selection cycling"><svg viewBox="0 0 16 16"><path d="M5 5h10v10H5z" fill="#8fbf86" /><path d="M3 0v7M0 3h7" stroke="#ccc" stroke-width="1.300" /></svg></button>
      <button class="sep" aria-label="Annotation visibility"><svg viewBox="0 0 16 16"><path d="M8 2v6l-6 6M8 8l6 6M6 10h4" fill="none" stroke="#ccc" stroke-width="2" /><circle cx="9" cy="4" r="3" fill="none" stroke="#ccc" /></svg></button>
      <button aria-label="Auto scale"><svg viewBox="0 0 16 16"><path d="M8 2v6l-6 6M8 8l6 6M6 10h4" fill="none" stroke="#ccc" stroke-width="2" /><path d="M11 1v6M8 4h6" stroke="#ccc" /></svg></button>
      <button class="narrow" aria-label="Annotation scale"><svg viewBox="0 0 16 16"><path d="M8 1v7l-6 6M8 8l6 6M5 11h6" fill="none" stroke="#ccc" stroke-width="2" /></svg></button>
      <button class="text">1:1<i class="caret"></i></button>
      <button class="sep" aria-label="Settings"><svg viewBox="0 0 16 16"><circle cx="8" cy="8" r="4" fill="none" stroke="#ccc" stroke-width="3" /><path d="M8 1v3M8 12v3M1 8h3M12 8h3M3 3l2 2M11 11l2 2M3 13l2-2M11 5l2-2" stroke="#ccc" stroke-width="2" /></svg></button>
      <button class="text ws">Drafting &amp; Annotation<i class="caret"></i></button>
      <button class="sep" aria-label="Annotation monitor"><svg viewBox="0 0 16 16"><path d="M8 1v14M1 8h14" stroke="#ddd" stroke-width="1.600" /></svg></button>
      <button class="sep" aria-label="Units"><svg viewBox="0 0 16 16"><path d="M6 1h4v14H6z" fill="#ddd" /></svg></button>
      <button class="text units">Decimal<i class="caret"></i></button>
      <button class="sep" aria-label="Quick properties"><svg viewBox="0 0 16 16"><path d="M4 3h8v11H4zM4 6h8M7 6v8M9 6v8" fill="none" stroke="#ccc" stroke-width="1.300" /></svg></button>
      <button class="sep" aria-label="Lock UI"><svg viewBox="0 0 16 16"><path d="M8 12H1V2h13v4M1 4h13" fill="none" stroke="#ccc" stroke-width="1.500" /><path d="M8 9h6v5H8z" fill="#ccc" /><path d="M12 9V7h3v2" fill="none" stroke="#ccc" /></svg></button>
      <button class="drop" aria-label="Lock options"><i class="caret"></i></button>
      <button class="sep" aria-label="Isolate objects"><svg viewBox="0 0 16 16"><path d="M1 2h7v6H1zM6 14l3-5 3 5z" fill="none" stroke="#ccc" stroke-width="1.300" /><circle cx="12" cy="6" r="3" fill="none" stroke="#ccc" stroke-width="1.300" /></svg></button>
      <button class="sep" aria-label="Hardware acceleration"><svg viewBox="0 0 16 16"><circle cx="8" cy="8" r="8" fill="#1265bd" /><path d="m5 9 2 2 5-5" fill="none" stroke="#0b3c78" stroke-width="1.500" /></svg></button>
      <button class="sep" aria-label="Clean screen"><svg viewBox="0 0 16 16"><path d="M1 2h14v12H1z" fill="none" stroke="#ccc" stroke-width="1.500" /><path d="M4 12V8l4 4zM12 4v4L8 4z" fill="#ccc" /></svg></button>
      <button aria-label="Customization"><svg viewBox="0 0 16 16"><path d="M1 3h14M1 8h14M1 13h14" stroke="#ddd" stroke-width="1.800" /></svg></button>
    </div>
  </footer>
</body>

</html>
```
FILE: styles.css
```css
* {
  margin: 0;
  padding: 0;
  box-sizing: border-box;
}

body {
  display: flex;
  flex-direction: column;
  min-height: 100vh;
  padding-bottom: 28px;
  background: #000;
  color: #e6e6e6;
  font: 8px/10px Roboto, "Noto Sans", sans-serif;
  overflow-x: hidden;
}

a {
  color: inherit;
  text-decoration: none;
}

button,
select,
input {
  border: 0;
  background: none;
  color: inherit;
  font: inherit;
}

button {
  display: flex;
  align-items: center;
  justify-content: center;
  white-space: nowrap;
}

select {
  appearance: none;
  flex: 1;
  min-width: 0;
}

svg {
  flex: none;
}

.caret {
  flex: none;
  border: 2px solid transparent;
  border-top: 3px solid #e8e8e8;
  border-bottom: 0;
}

.caret.dark {
  border-top-color: #333;
}

/* title bar */
.top {
  display: grid;
  grid-template: 16px 13px / 28px 1fr;
  background: #545454;
  border-bottom: 1px solid #444;
}

.app-btn {
  grid-row: 1 / 3;
  height: 27px;
  gap: 2px;
  background: linear-gradient(#b0b0b0, #7c7c7c 50%, #8a8a8a);
  border: 1px solid #444;
}

.titlebar {
  display: flex;
  background: #fff;
}

.titlebar svg {
  width: 11px;
  height: 11px;
}

.qat,
.infocenter {
  display: flex;
  align-items: center;
  background: linear-gradient(#7c7c7c, #5a5a5a);
}

.qat {
  width: 294px;
  padding-left: 3px;
}

.qat button {
  width: 16px;
  height: 16px;
}

.qat > .caret {
  margin: 0 4px;
}

.qat .customize {
  margin-left: 6px;
}

.workspace {
  display: flex;
  align-items: center;
  gap: 2px;
  width: 120px;
  height: 14px;
  margin: 0 2px 0 0;
  padding: 0 4px 0 2px;
  background: #555;
  border: 1px solid #8a8a8a;
}

.title {
  flex: 1;
  display: flex;
  justify-content: center;
  gap: 8px;
  line-height: 16px;
  color: #222;
}

.infocenter {
  width: 298px;
}

.search {
  width: 119px;
  height: 14px;
  margin-right: 2px;
  padding: 0 2px;
  background: #666;
  border: 1px solid #444;
  font-style: italic;
}

.search::placeholder {
  color: #bbb;
}

.infocenter button {
  width: 16px;
}

.infocenter .expand {
  width: 10px;
  height: 16px;
  border-right: 1px solid #444;
}

.expand::before {
  content: "";
  border: 3px solid transparent;
  border-left-color: #fff;
  border-right: 0;
}

.infocenter .signin {
  justify-content: flex-start;
  width: 80px;
  gap: 4px;
  padding: 0 4px 0 2px;
}

.signin .caret {
  margin-left: auto;
}

.infocenter .help {
  width: 11px;
  height: 11px;
  margin-left: 12px;
  border-radius: 50%;
  background: #e8f0fa;
  color: #1d4f96;
  font-weight: bold;
}

.notice {
  width: 8px;
  height: 8px;
  margin: 0 2px 4px 2px;
  border-radius: 50%;
  background: #d4622f;
}

.win-btns {
  display: flex;
  width: 109px;
  padding-left: 15px;
}

.win-btns button {
  width: 31px;
}

/* ribbon tabs */
.ribbon-tabs {
  display: flex;
  align-items: flex-end;
  padding-left: 2px;
  color: #cfcfcf;
}

.ribbon-tabs a {
  padding: 0 6px;
  line-height: 12px;
}

.ribbon-tabs .active {
  background: #707070;
  color: #fff;
}

.min-ribbon {
  height: 12px;
  margin-left: 9px;
  gap: 4px;
}

.min-ribbon b {
  width: 9px;
  height: 5px;
  border: 2px solid #eee;
  border-bottom-width: 1px;
  border-radius: 1px;
  background: #555;
}

/* ribbon panels */
.ribbon {
  display: flex;
  height: 66px;
  background: linear-gradient(#4c4c4c, #3c3c3c);
  border-bottom: 1px solid #666;
}

.panel {
  display: flex;
  flex-direction: column;
  flex: none;
  background: linear-gradient(#5a5a5a, #565656);
  border-right: 1px solid #454545;
}

.panel-body {
  flex: 1;
  display: flex;
  padding-top: 3px;
}

.panel h2 {
  display: flex;
  align-items: center;
  justify-content: center;
  gap: 4px;
  height: 13px;
  background: linear-gradient(#4f4f4f, #454545);
  font-size: 8px;
  font-weight: normal;
}

.panel h2 .caret {
  border-width: 4px 3px 0;
}

.launcher {
  width: 6px;
  height: 6px;
}

.draw { width: 151px; }
.modify { width: 166px; }
.annotation { width: 126px; }
.layers { width: 182px; }
.block { width: 107px; }
.properties { width: 177px; }
.groups { width: 46px; }
.utilities { width: 65px; }
.clipboard { width: 54px; }
.view { width: 42px; }

.big {
  flex-direction: column;
  justify-content: flex-start;
  width: 30px;
  height: 48px;
}

.big svg {
  width: 22px;
  height: 22px;
  margin: 1px 0 2px;
}

.big .caret {
  margin-top: 1px;
}

.big.wide {
  width: 42px;
}

.small {
  justify-content: flex-start;
  gap: 3px;
  height: 16px;
}

.small svg {
  width: 12px;
  height: 12px;
}

.draw .panel-body {
  gap: 1px;
}

.draw .small {
  gap: 5px;
}

.grid {
  display: grid;
  grid-template-columns: 48px 48px 47px 16px;
  grid-template-rows: repeat(3, 16px);
  padding-left: 3px;
}

.grid .caret {
  margin-left: auto;
  margin-right: 6px;
}

.annotation .big {
  width: 31px;
}

.annotation .big.wide {
  width: 40px;
}

.annotation .col {
  margin-left: 3px;
}

.annotation .small {
  width: 47px;
}

.annotation .small .caret {
  margin-left: auto;
}

/* drop-down boxes */
.combo {
  display: flex;
  align-items: center;
  gap: 4px;
  height: 15px;
  padding: 0 1px 0 3px;
  background: linear-gradient(#4a4a4a, #626262);
  border: 1px solid #3c3c3c;
}

.combo .caret {
  border-width: 4px 3px 0;
}

.combo svg {
  width: 11px;
  height: 11px;
}

.combo .swatch {
  width: 10px;
  height: 10px;
  background: #fff;
  border: 1px solid #bbb;
}

.layer-combo {
  gap: 2px;
  width: 138px;
  margin-bottom: 1px;
}

.layer-combo select {
  padding-left: 2px;
}

.tools {
  display: flex;
  align-items: center;
  height: 16px;
}

.tools button {
  width: 16px;
}

.tools svg {
  width: 12px;
  height: 12px;
}

.tools .small {
  width: auto;
  padding-left: 2px;
}

.block .panel-body {
  gap: 1px;
}

.block .big {
  width: 27px;
}

.props {
  display: grid;
  grid-template-columns: 12px 120px;
  grid-template-rows: repeat(3, 16px);
  column-gap: 1px;
  align-items: center;
}

.props > svg {
  width: 11px;
  height: 11px;
}

.props .swatch {
  margin: 0 2px 0 5px;
}

.props .line {
  width: 40px;
  height: 1px;
  margin-right: -2px;
  background: #ddd;
}

.properties h2 {
  padding-left: 60px;
  justify-content: flex-start;
}

.properties .launcher {
  margin: 0 2px 0 auto;
}

.groups .panel-body {
  gap: 1px;
}

.groups .big {
  width: 28px;
}

.small.on {
  background: #5578b0;
  border: 1px solid #86a5d6;
}

.groups .col .small {
  width: 15px;
  justify-content: center;
}

.utilities .big {
  width: 48px;
}

.clipboard .big,
.view .big {
  width: 38px;
}

/* drawing tabs */
.file-tabs {
  display: flex;
  align-items: center;
  height: 19px;
  padding: 1px 0 0 13px;
  background: #3a3a3a;
  border-bottom: 2px solid #5c5c5c;
  color: #b5b5b5;
}

.file-tabs a {
  display: flex;
  align-items: center;
  justify-content: space-between;
  width: 91px;
  height: 14px;
  padding: 0 9px 0 7px;
  background: #505050;
  clip-path: polygon(5px 0, 86px 0, 100% 100%, 0 100%);
}

.file-tabs .start {
  width: 84px;
  padding-left: 8px;
  clip-path: polygon(5px 0, 79px 0, 100% 100%, 0 100%);
}

.file-tabs .active {
  width: 88px;
  padding: 0 12px 0 9px;
  background: #707070;
  color: #fff;
  clip-path: polygon(5px 0, 83px 0, 100% 100%, 0 100%);
}

.file-tabs i {
  color: #999;
  font-style: normal;
  font-size: 9px;
}

.file-tabs button {
  width: 15px;
  height: 12px;
  border-radius: 3px;
  background: #555;
  color: #ddd;
  font-size: 12px;
}

/* model space */
.viewport {
  position: relative;
  flex: 1;
  min-height: 300px;
  background: #222a31;
  border-right: 1px solid #1d5f7c;
  box-shadow: inset -4px 0 #b3d9ee;
}

.canvas {
  position: absolute;
  top: 0;
  left: 0;
  width: calc(100% - 4px);
  height: 100%;
}

.view-label {
  position: absolute;
  top: 4px;
  left: 2px;
  line-height: 12px;
}

.doc-btns {
  position: absolute;
  top: 6px;
  right: 11px;
  display: flex;
  gap: 5px;
}

.doc-btns svg {
  width: 8px;
  height: 8px;
}

.navbar {
  position: absolute;
  top: 18px;
  right: 7px;
  height: 160px;
  border-radius: 2px;
  background: #596066;
}

.watermark {
  position: absolute;
  right: 7px;
  bottom: 21px;
  left: 9px;
  display: flex;
  align-items: flex-end;
  color: #2f373e;
  font: 21px/28px "Liberation Sans", sans-serif;
  white-space: nowrap;
}

.watermark span + span {
  margin-left: 21px;
}

.watermark svg {
  margin: 0 0 4px auto;
}

/* command line */
.command {
  display: flex;
  height: 37px;
  border-top: 2px solid #666;
  border-bottom: 1px solid #888;
}

.command-side {
  display: flex;
  flex-direction: column;
  align-items: center;
  justify-content: space-between;
  width: 15px;
  padding: 2px 0;
  background: linear-gradient(#777, #4a4a4a);
}

.grip {
  width: 11px;
  height: 4px;
  border-top: 1px dotted #bbb;
  border-bottom: 1px dotted #bbb;
}

.command-side svg {
  width: 8px;
  height: 8px;
}

.command-main {
  flex: 1;
  font: 8px/12px "Liberation Mono", monospace;
  color: #222;
}

.command-main p {
  height: 20px;
  padding: 7px 1px 0;
  background: #c8c8c8;
  border-bottom: 1px solid #999;
}

.prompt {
  display: flex;
  align-items: center;
  gap: 2px;
  height: 14px;
  padding-left: 4px;
  background: #fff;
}

.prompt svg {
  width: 10px;
  height: 10px;
}

.prompt input {
  flex: 1;
  padding-left: 3px;
  font-style: italic;
  outline: 0;
}

.prompt input::placeholder {
  color: #999;
}

/* layout tabs + status bar */
.bottom {
  display: flex;
  justify-content: space-between;
  height: 18px;
  background: #383838;
}

.layout-tabs {
  display: flex;
  padding-left: 7px;
  color: #b5b5b5;
}

.layout-tabs a {
  height: 12px;
  padding: 0 7px;
  margin-right: 1px;
  background: #585858;
  line-height: 12px;
  clip-path: polygon(0 0, 100% 0, calc(100% - 5px) 100%, 5px 100%);
}

.layout-tabs .active {
  padding: 0 8px;
  background: #7a7a7a;
  color: #fff;
  font-weight: bold;
}

.layout-tabs button {
  width: 16px;
  height: 11px;
  border-radius: 0 0 5px 5px;
  background: #505050;
  font-size: 11px;
}

.status {
  display: flex;
  background: #4c4c4c;
  border: 1px solid #707070;
  border-width: 1px 0 1px 1px;
  color: #f2f2f2;
}

.status button {
  width: 17px;
}

.status svg {
  width: 11px;
  height: 11px;
}

.status .sep {
  border-left: 1px solid #707070;
}

.status .coords {
  width: 122px;
  padding-left: 12px;
}

.status .model {
  width: 34px;
}

.status .drop {
  width: 10px;
}

.status .drop .caret {
  border-width: 4px 3px 0;
}

.status .narrow {
  width: 14px;
}

.status .text {
  width: auto;
  min-width: 24px;
  gap: 3px;
}

.status .ws {
  width: 93px;
}

.status .units {
  width: 48px;
  justify-content: space-between;
  padding: 0 3px 0 2px;
}
```
